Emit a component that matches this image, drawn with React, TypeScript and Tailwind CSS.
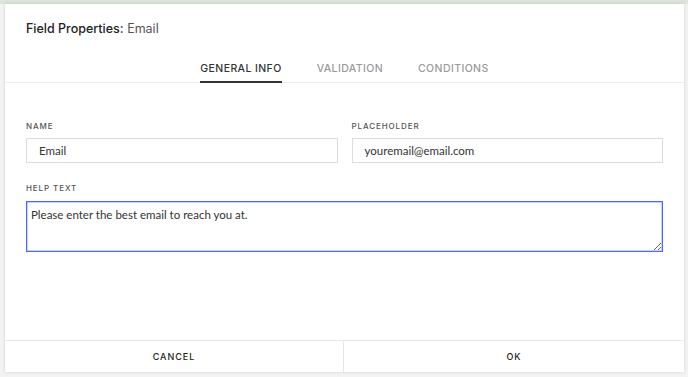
import React from "react";

const font = { fontFamily: "Inter, 'Open Sans', sans-serif" };
const inputFont = { fontFamily: "Lato, 'Open Sans', sans-serif" };

export default function App() {
  return (
    <div className="w-[688px] h-[377px] bg-[#f3f3f3] relative overflow-hidden" style={font}>
      <div className="h-[4px] bg-[#dfe3de]" />
      <div className="absolute left-[5px] top-[4px] w-[679px] h-[368px] bg-white shadow-[0_0_3px_rgba(0,0,0,0.15)] flex flex-col">
        <div className="pt-[17px] pl-[21px] h-[16px] box-content text-[12.5px] leading-[16px]">
          <span className="text-[#222] font-medium">Field Properties:</span>{" "}
          <span className="text-[#555]">Email</span>
        </div>
        <div className="mt-[18px] flex justify-center gap-[35px] border-b border-[#ececec]">
          <div className="pt-[7px] pb-[5px] leading-[14px] text-[10.5px] tracking-[0.4px] text-[#333] font-medium border-b-2 border-[#333] -mb-px">
            GENERAL INFO
          </div>
          <div className="pt-[7px] pb-[5px] leading-[14px] text-[10.5px] tracking-[0.4px] text-[#9a9a9a] font-medium border-b-2 border-transparent -mb-px">
            VALIDATION
          </div>
          <div className="pt-[7px] pb-[5px] leading-[14px] text-[10.5px] tracking-[0.4px] text-[#9a9a9a] font-medium border-b-2 border-transparent -mb-px">
            CONDITIONS
          </div>
        </div>
        <div className="px-[21px] pt-[38px]">
          <div className="grid grid-cols-2 gap-[14px]">
            <div className="flex flex-col">
              <div className="text-[8px] leading-[10px] tracking-[0.9px] text-[#555] font-medium">NAME</div>
              <div className="mt-[7px] h-[25px] border border-[#dcdcdc] flex items-center pl-[12px] text-[11.5px] text-[#333]" style={inputFont}>
                Email
              </div>
            </div>
            <div className="flex flex-col">
              <div className="text-[8px] leading-[10px] tracking-[0.9px] text-[#555] font-medium">PLACEHOLDER</div>
              <div className="mt-[7px] h-[25px] border border-[#dcdcdc] flex items-center pl-[12px] text-[11.5px] text-[#333]" style={inputFont}>
                youremail@email.com
              </div>
            </div>
          </div>
          <div className="mt-[20px] text-[8px] leading-[10px] tracking-[0.9px] text-[#555] font-medium">HELP TEXT</div>
          <textarea
            className="mt-[8px] block w-full h-[51px] border border-[#4a69f6] shadow-[inset_0_0_0_0.5px_#8fa3fa] outline-none px-[4px] pt-[5px] pb-[3px] text-[11.5px] leading-[16px] text-[#333]"
            style={inputFont}
            defaultValue="Please enter the best email to reach you at."
          />
        </div>
        <div className="flex-1" />
        <div className="h-[32px] border-t border-[#e6e6e6] flex">
          <div className="w-[339px] border-r border-[#e6e6e6] flex items-center justify-center text-[9px] tracking-[1px] font-medium text-[#222]">
            CANCEL
          </div>
          <div className="flex-1 flex items-center justify-center text-[9px] tracking-[1px] font-medium text-[#222]">
            OK
          </div>
        </div>
      </div>
    </div>
  );
}
